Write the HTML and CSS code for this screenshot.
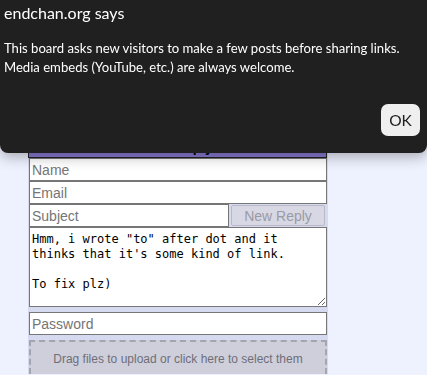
FILE: index.html
```html
<!DOCTYPE html>
<html lang="en">
<head>
  <meta charset="UTF-8">
  <meta name="viewport" content="width=device-width, initial-scale=1.0">
  <title>Reply - endchan</title>
  <link rel="stylesheet" href="styles.css">
</head>
<body>
  <div class="page">
    <form class="reply-form">
      <div class="form-title">New Reply</div>

      <input class="field" type="text" placeholder="Name">
      <input class="field" type="text" placeholder="Email">

      <div class="subject-row">
        <input class="field field-subject" type="text" placeholder="Subject">
        <button class="btn-reply" type="button" disabled>New Reply</button>
      </div>

      <textarea class="message">Hmm, i wrote "to" after dot and it
thinks that it's some kind of link.

To fix plz)</textarea>

      <input class="field field-password" type="password" placeholder="Password">

      <div class="dropzone">Drag files to upload or click here to select them</div>
    </form>
  </div>

  <!-- browser alert dialog -->
  <div class="alert">
    <div class="alert-title">endchan.org says</div>
    <p class="alert-text">
      This board asks new visitors to make a few posts before sharing links.<br>
      Media embeds (YouTube, etc.) are always welcome.
    </p>
    <div class="alert-actions">
      <button class="alert-ok" type="button">OK</button>
    </div>
  </div>
</body>
</html>
```

FILE: styles.css
```css
* {
  margin: 0;
  padding: 0;
  box-sizing: border-box;
}

body {
  font-family: "Liberation Sans", Arial, sans-serif;
  background: #eef2ff;
  color: #000;
  height: 375px;
  overflow: hidden;
}

.page {
  padding: 138px 0 0 28px;
}

.reply-form {
  width: 300px;
  background: #d6daf0;
}

.form-title {
  width: 299px;
  height: 20px;
  background: #8a7bd5;
  border: 1px solid #222;
  text-align: center;
  font-weight: 700;
  font-size: 14px;
  line-height: 16px;
}

.field {
  display: block;
  width: 298px;
  height: 23px;
  margin-left: 1px;
  border: 1px solid #767676;
  background: #fff;
  font-family: "Liberation Sans", Arial, sans-serif;
  font-size: 14px;
  padding: 0 2px;
  color: #000;
}

.field::placeholder {
  color: #757575;
}

.subject-row {
  display: flex;
  align-items: center;
}

.field-subject {
  width: 200px;
  flex-shrink: 0;
}

.btn-reply {
  width: 94px;
  height: 21px;
  margin-left: 2px;
  background: #d8d8e4;
  border: 1px solid #b9b9c9;
  border-radius: 2px;
  color: #9a9aa6;
  font-family: "Liberation Sans", Arial, sans-serif;
  font-size: 14px;
}

.message {
  display: block;
  width: 298px;
  height: 80px;
  margin-left: 1px;
  border: 1px solid #767676;
  background: #fff;
  font-family: "DejaVu Sans Mono", monospace;
  font-size: 12px;
  line-height: 15px;
  padding: 4px 2px;
  resize: vertical;
}

.field-password {
  margin-top: 5px;
}

.dropzone {
  width: 298px;
  height: 34px;
  margin: 5px 0 0 1px;
  background: #cfcfdc;
  border: 2px dashed #a5a5b0;
  border-bottom: none;
  color: #6e6e78;
  font-size: 12px;
  text-align: center;
  padding-top: 10px;
}

.alert {
  position: fixed;
  top: 0;
  left: 0;
  width: 100%;
  height: 153px;
  background: #202020;
  color: #fff;
  border-radius: 0 0 8px 8px;
  box-shadow: 0 4px 14px rgba(0, 0, 0, 0.3);
  font-family: Lato, "Noto Sans", sans-serif;
  padding: 2px 4px 0;
}

.alert-title {
  font-size: 16px;
  line-height: 22px;
}

.alert-text {
  margin-top: 15px;
  font-size: 13.1px;
  line-height: 19px;
  white-space: nowrap;
}

.alert-actions {
  display: flex;
  justify-content: flex-end;
  margin-top: 27px;
  padding-right: 3px;
}

.alert-ok {
  width: 39px;
  height: 32px;
  background: #efefef;
  border: none;
  border-radius: 7px;
  color: #202020;
  font-family: Lato, "Noto Sans", sans-serif;
  font-size: 15.5px;
}
```
